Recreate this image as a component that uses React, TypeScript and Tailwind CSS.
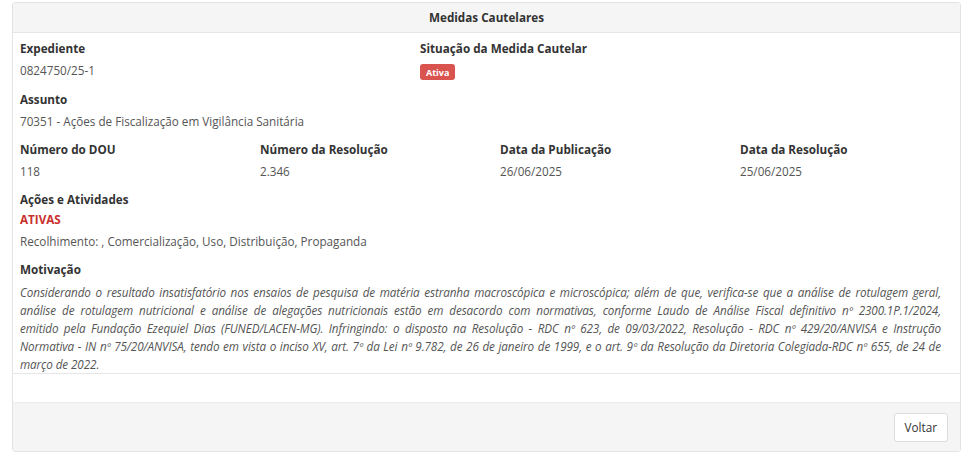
import React from "react";

const font = { fontFamily: '"Open Sans", "Noto Sans", Arial, sans-serif' };

function Label({ children }: { children: React.ReactNode }) {
  return <div className="text-[11.7px] leading-[17px] font-bold text-[#333]">{children}</div>;
}
function Value({ children }: { children: React.ReactNode }) {
  return <div className="mt-[5px] text-[11.7px] leading-[17px] text-[#555]">{children}</div>;
}

const lines = [
  "Considerando o resultado insatisfatório nos ensaios de pesquisa de matéria estranha macroscópica e microscópica; além de que, verifica-se que a análise de rotulagem geral,",
  "análise de rotulagem nutricional e análise de alegações nutricionais estão em desacordo com normativas, conforme Laudo de Análise Fiscal definitivo nº 2300.1P.1/2024,",
  "emitido pela Fundação Ezequiel Dias (FUNED/LACEN-MG). Infringindo: o disposto na Resolução - RDC nº 623, de 09/03/2022, Resolução - RDC nº 429/20/ANVISA e Instrução",
  "Normativa - IN nº 75/20/ANVISA, tendo em vista o inciso XV, art. 7º da Lei nº 9.782, de 26 de janeiro de 1999, e o art. 9º da Resolução da Diretoria Colegiada-RDC nº 655, de 24 de",
  "março de 2022.",
];

export default function App() {
  return (
    <div className="w-[966px] h-[455px] bg-white pt-[2px] pl-[12px] overflow-hidden" style={font}>
      <div className="w-[949px] border border-[#e3e3e3] rounded-[3px] overflow-hidden">
        <div className="h-[30px] bg-[#f5f5f5] border-b border-[#e6e6e6] flex items-center justify-center text-[11.7px] font-bold text-[#333]">
          Medidas Cautelares
        </div>
        <div className="pt-[7px] pb-0 pl-[7px] pr-[19px] border-b border-[#e6e6e6]">
          <div className="flex mb-[11px]">
            <div className="w-[400px]">
              <Label>Expediente</Label>
              <Value>0824750/25-1</Value>
            </div>
            <div className="h-[40px]">
              <Label>Situação da Medida Cautelar</Label>
              <div className="mt-[7px] flex">
                <span className="h-[16px] px-[6px] rounded-[3px] bg-[#d9534f] text-white text-[9px] font-bold flex items-center leading-none">
                  Ativa
                </span>
              </div>
            </div>
          </div>
          <div className="mb-[11px]">
            <Label>Assunto</Label>
            <Value>70351 - Ações de Fiscalização em Vigilância Sanitária</Value>
          </div>
          <div className="grid grid-cols-[240px_240px_240px_1fr] mb-[11px]">
            <div>
              <Label>Número do DOU</Label>
              <Value>118</Value>
            </div>
            <div>
              <Label>Número da Resolução</Label>
              <Value>2.346</Value>
            </div>
            <div>
              <Label>Data da Publicação</Label>
              <Value>26/06/2025</Value>
            </div>
            <div>
              <Label>Data da Resolução</Label>
              <Value>25/06/2025</Value>
            </div>
          </div>
          <div className="mb-[11px]">
            <Label>Ações e Atividades</Label>
            <div className="mt-[3px] text-[11.7px] leading-[17px] font-bold text-[#c9302c]">ATIVAS</div>
            <Value>Recolhimento: , Comercialização, Uso, Distribuição, Propaganda</Value>
          </div>
          <div>
            <Label>Motivação</Label>
            <div className="mt-[5px] text-[11.7px] tracking-[-0.1px] leading-[18px] italic text-[#555]">
              {lines.map((l, i) => (
                <div
                  key={i}
                  className={
                    i < lines.length - 1
                      ? "whitespace-nowrap text-justify [text-align-last:justify]"
                      : "whitespace-nowrap"
                  }
                >
                  {l}
                </div>
              ))}
            </div>
          </div>
        </div>
        <div className="h-[28px] bg-white" />
        <div className="bg-[#f5f5f5] border-t border-[#ececec] flex justify-end pt-[10px] pb-[9px] pr-[12px]">
          <button className="h-[29px] px-[10px] bg-white border border-[#dcdcdc] rounded-[3px] text-[11.7px] text-[#333]">
            Voltar
          </button>
        </div>
      </div>
    </div>
  );
}
